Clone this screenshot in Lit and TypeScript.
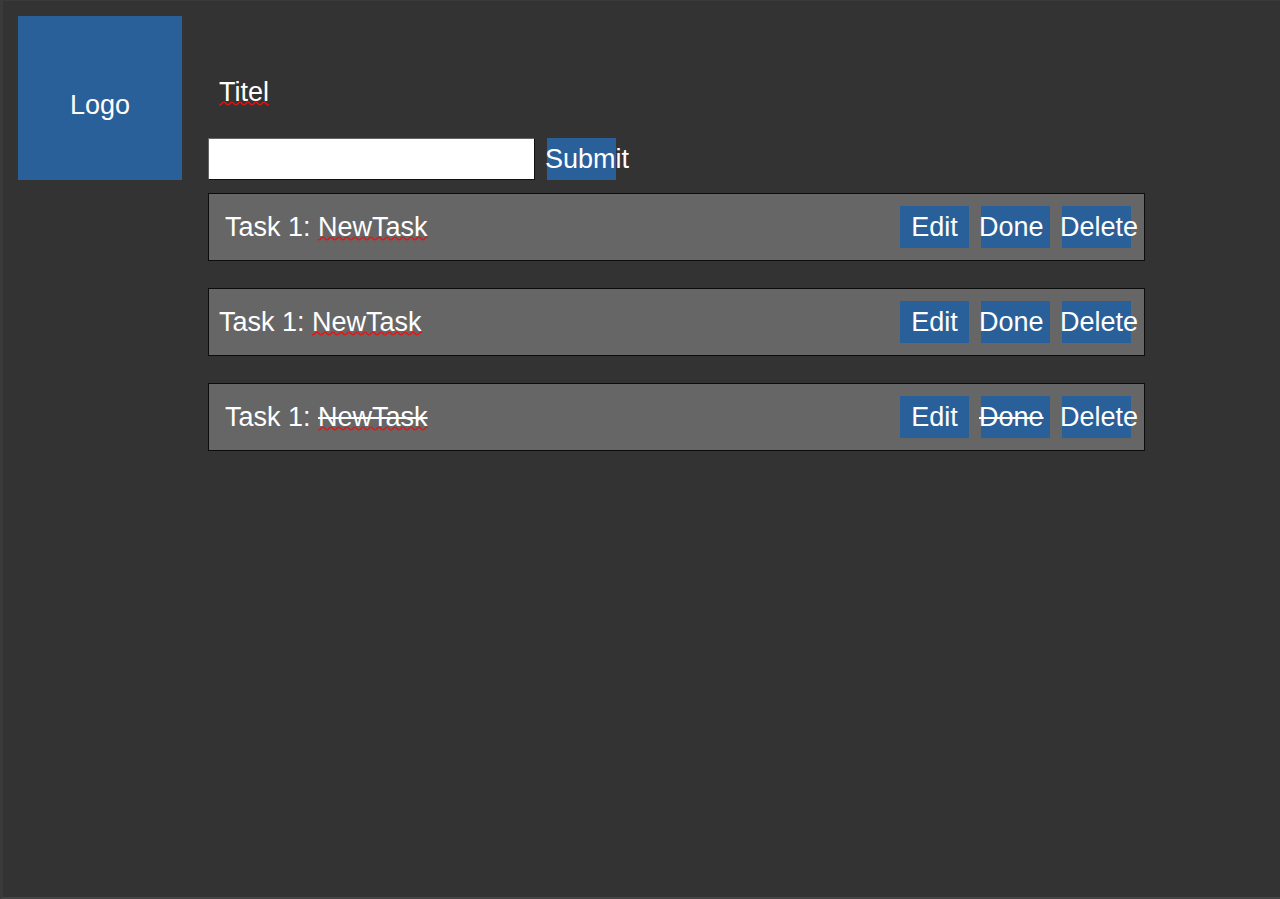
import { LitElement, html, css } from "lit";
import { customElement, property, state } from "lit/decorators.js";
import { classMap } from "lit/directives/class-map.js";

interface Task {
  label: string;
  name: string;
  done: boolean;
  tight: boolean;
}

const shared = css`
  * {
    box-sizing: border-box;
  }
  button {
    display: block;
    flex: none;
    width: 69px;
    height: 42px;
    margin: 0;
    padding: 0;
    border: 0;
    background: #2a6099;
    color: #fff;
    font: inherit;
    white-space: nowrap;
    overflow: visible;
    cursor: pointer;
  }
  .wide {
    text-align: left;
    text-indent: -2px;
  }
  .struck {
    text-decoration: line-through 2px;
  }
  .spelling {
    display: inline-block;
    background: url("data:image/svg+xml,%3Csvg xmlns='http://www.w3.org/2000/svg' width='8' height='6'%3E%3Cpath d='M-2 1.5L0 3.5Q1 4.2 2 3.5L4 1.5Q5 .8 6 1.5L8 3.5Q9 4.2 10 3.5' fill='none' stroke='%23f00c0c' stroke-width='1.3'/%3E%3C/svg%3E")
      left bottom repeat-x;
  }
`;

@customElement("task-row")
export class TaskRow extends LitElement {
  @property({ attribute: false }) task!: Task;

  static styles = [
    shared,
    css`
      :host {
        display: block;
      }
      .row {
        display: flex;
        align-items: center;
        justify-content: space-between;
        padding: 12px 13px 12px 16px;
        background: #666;
        border: 1px solid #0c0c0c;
      }
      .tight {
        padding-left: 10px;
      }
      .actions {
        display: flex;
        gap: 12px;
      }
    `,
  ];

  private toggle() {
    this.dispatchEvent(new CustomEvent("toggle-task"));
  }

  private remove() {
    this.dispatchEvent(new CustomEvent("remove-task"));
  }

  render() {
    const { label, name, done, tight } = this.task;
    return html`
      <div class=${classMap({ row: true, tight })}>
        <div>
          ${label} <span class="spelling"><span class=${classMap({ struck: done })}>${name}</span></span>
        </div>
        <div class="actions">
          <button type="button">Edit</button>
          <button type="button" class="wide" @click=${this.toggle}>
            <span class=${classMap({ struck: done })}>Done</span>
          </button>
          <button type="button" class="wide" @click=${this.remove}>Delete</button>
        </div>
      </div>
    `;
  }
}

@customElement("app-root")
export class AppRoot extends LitElement {
  @state() private tasks: Task[] = [
    { label: "Task 1:", name: "NewTask", done: false, tight: false },
    { label: "Task 1:", name: "NewTask", done: false, tight: true },
    { label: "Task 1:", name: "NewTask", done: true, tight: false },
  ];

  static styles = [
    shared,
    css`
      :host {
        box-sizing: border-box;
        display: flex;
        align-items: flex-start;
        gap: 26px;
        min-height: 100vh;
        padding: 15px 135px 15px 15px;
        border: solid #3a3a3a;
        border-width: 1px 0 2px 3px;
        border-bottom-color: #444;
        background: #333;
        color: #fff;
        font: 27px/30px "Liberation Sans", Arial, sans-serif;
      }
      .logo {
        display: flex;
        flex: none;
        align-items: center;
        justify-content: center;
        width: 164px;
        height: 164px;
        padding-top: 14px;
        background: #2a6099;
      }
      main {
        flex: 1;
        min-width: 0;
      }
      h1 {
        margin: 0;
        padding: 61px 0 31px 11px;
        font: inherit;
      }
      form {
        display: flex;
        gap: 12px;
        margin-bottom: 13px;
      }
      input {
        width: 327px;
        height: 42px;
        padding: 0 10px;
        border: 1px solid #111;
        border-top-color: #666;
        border-left-color: #666;
        border-radius: 0;
        background: #fff;
        color: #222;
        font: inherit;
      }
      .tasks {
        display: flex;
        flex-direction: column;
        gap: 27px;
        margin: 0;
        padding: 0;
        list-style: none;
      }
    `,
  ];

  private add(event: Event) {
    event.preventDefault();
    const form = event.target as HTMLFormElement;
    const input = form.elements.namedItem("task") as HTMLInputElement;
    const name = input.value.trim();
    if (!name) return;
    const label = `Task ${this.tasks.length + 1}:`;
    this.tasks = [...this.tasks, { label, name, done: false, tight: false }];
    form.reset();
  }

  private toggle(task: Task) {
    this.tasks = this.tasks.map((t) => (t === task ? { ...t, done: !t.done } : t));
  }

  private remove(task: Task) {
    this.tasks = this.tasks.filter((t) => t !== task);
  }

  render() {
    return html`
      <div class="logo">Logo</div>
      <main>
        <h1><span class="spelling">Titel</span></h1>
        <form @submit=${this.add}>
          <input name="task" type="text" aria-label="Task" autocomplete="off" />
          <button type="submit" class="wide">Submit</button>
        </form>
        <ul class="tasks">
          ${this.tasks.map(
            (task) => html`
              <li>
                <task-row
                  .task=${task}
                  @toggle-task=${() => this.toggle(task)}
                  @remove-task=${() => this.remove(task)}
                ></task-row>
              </li>
            `,
          )}
        </ul>
      </main>
    `;
  }
}
